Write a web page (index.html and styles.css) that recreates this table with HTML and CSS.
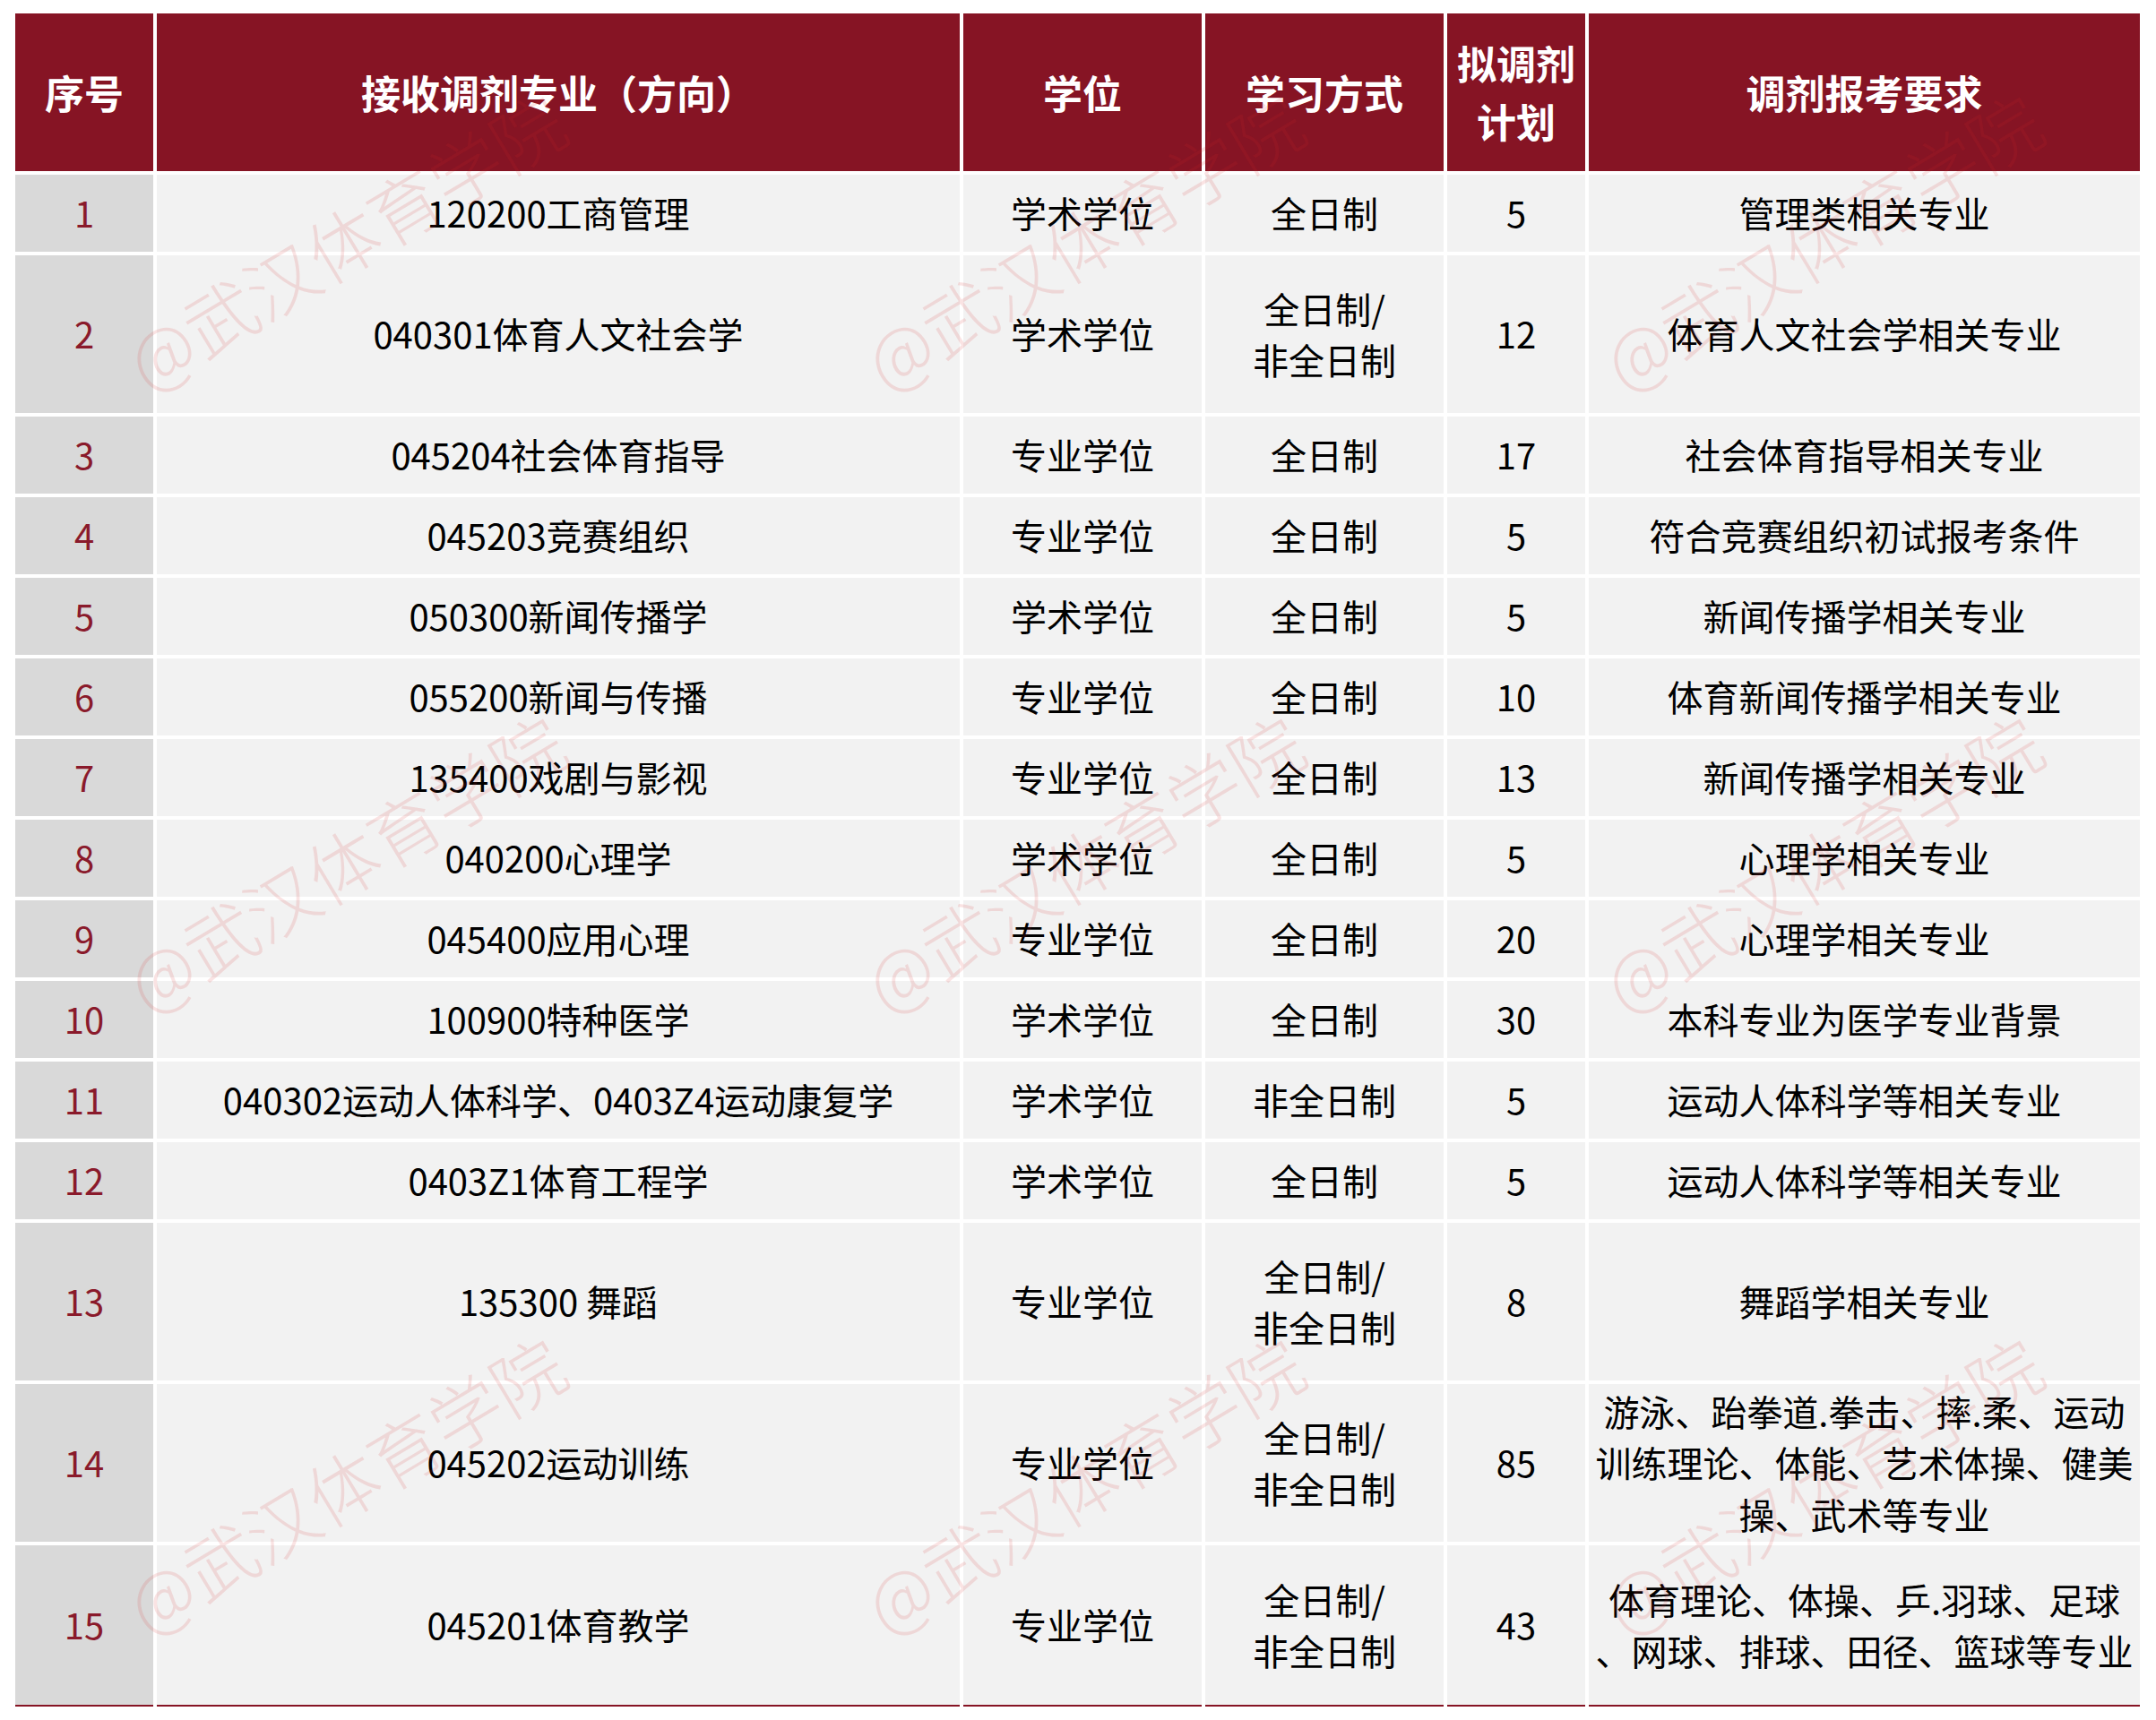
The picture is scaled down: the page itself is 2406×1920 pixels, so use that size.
FILE: index.html
```html
<!DOCTYPE html>
<html lang="zh-CN">
<head>
<meta charset="utf-8">
<title>接收调剂专业</title>
<link rel="stylesheet" href="styles.css">
</head>
<body>
<div class="page">
  <table class="grid">
    <colgroup>
      <col class="c-idx"><col class="c-major"><col class="c-degree"><col class="c-mode"><col class="c-plan"><col class="c-req">
    </colgroup>
    <thead>
      <tr class="h">
        <th>序号</th>
        <th>接收调剂专业（方向）</th>
        <th>学位</th>
        <th>学习方式</th>
        <th>拟调剂<br>计划</th>
        <th>调剂报考要求</th>
      </tr>
    </thead>
    <tbody>
      <tr class="s"><td class="idx">1</td><td>120200工商管理</td><td>学术学位</td><td>全日制</td><td>5</td><td>管理类相关专业</td></tr>
      <tr class="d"><td class="idx">2</td><td>040301体育人文社会学</td><td>学术学位</td><td>全日制/<br>非全日制</td><td>12</td><td>体育人文社会学相关专业</td></tr>
      <tr class="s"><td class="idx">3</td><td>045204社会体育指导</td><td>专业学位</td><td>全日制</td><td>17</td><td>社会体育指导相关专业</td></tr>
      <tr class="s"><td class="idx">4</td><td>045203竞赛组织</td><td>专业学位</td><td>全日制</td><td>5</td><td>符合竞赛组织初试报考条件</td></tr>
      <tr class="s"><td class="idx">5</td><td>050300新闻传播学</td><td>学术学位</td><td>全日制</td><td>5</td><td>新闻传播学相关专业</td></tr>
      <tr class="s"><td class="idx">6</td><td>055200新闻与传播</td><td>专业学位</td><td>全日制</td><td>10</td><td>体育新闻传播学相关专业</td></tr>
      <tr class="s"><td class="idx">7</td><td>135400戏剧与影视</td><td>专业学位</td><td>全日制</td><td>13</td><td>新闻传播学相关专业</td></tr>
      <tr class="s"><td class="idx">8</td><td>040200心理学</td><td>学术学位</td><td>全日制</td><td>5</td><td>心理学相关专业</td></tr>
      <tr class="s"><td class="idx">9</td><td>045400应用心理</td><td>专业学位</td><td>全日制</td><td>20</td><td>心理学相关专业</td></tr>
      <tr class="s"><td class="idx">10</td><td>100900特种医学</td><td>学术学位</td><td>全日制</td><td>30</td><td>本科专业为医学专业背景</td></tr>
      <tr class="s"><td class="idx">11</td><td>040302运动人体科学、0403Z4运动康复学</td><td>学术学位</td><td>非全日制</td><td>5</td><td>运动人体科学等相关专业</td></tr>
      <tr class="s"><td class="idx">12</td><td>0403Z1体育工程学</td><td>学术学位</td><td>全日制</td><td>5</td><td>运动人体科学等相关专业</td></tr>
      <tr class="d"><td class="idx">13</td><td>135300 舞蹈</td><td>专业学位</td><td>全日制/<br>非全日制</td><td>8</td><td>舞蹈学相关专业</td></tr>
      <tr class="d"><td class="idx">14</td><td>045202运动训练</td><td>专业学位</td><td>全日制/<br>非全日制</td><td>85</td><td>游泳、跆拳道.拳击、摔.柔、运动<br>训练理论、体能、艺术体操、健美<br>操、武术等专业</td></tr>
      <tr class="d last"><td class="idx">15</td><td>045201体育教学</td><td>专业学位</td><td>全日制/<br>非全日制</td><td>43</td><td>体育理论、体操、乒.羽球、足球<br>、网球、排球、田径、篮球等专业</td></tr>
    </tbody>
  </table>
  <div class="watermarks" aria-hidden="true">
    <span class="wm">@武汉体育学院</span><span class="wm">@武汉体育学院</span><span class="wm">@武汉体育学院</span>
    <span class="wm">@武汉体育学院</span><span class="wm">@武汉体育学院</span><span class="wm">@武汉体育学院</span>
    <span class="wm">@武汉体育学院</span><span class="wm">@武汉体育学院</span><span class="wm">@武汉体育学院</span>
  </div>
</div>
</body>
</html>
```

FILE: styles.css
```css
html, body {
  margin: 0;
  padding: 0;
  background: #ffffff;
}

body {
  font-family: "Noto Sans CJK SC", "Noto Sans", "Liberation Sans", sans-serif;
}

.page {
  position: relative;
  width: 2406px;
  height: 1920px;
  padding: 11px 0 0 13px;
  box-sizing: border-box;
  overflow: hidden;
}

.grid {
  border-collapse: separate;
  border-spacing: 4px;
  table-layout: fixed;
  width: 2379px;
}

.c-idx { width: 154px; }
.c-major { width: 896px; }
.c-degree { width: 266px; }
.c-mode { width: 266px; }
.c-plan { width: 154px; }
.c-req { width: 615px; }

.grid th {
  background: #861424;
  color: #ffffff;
  font-size: 44px;
  font-weight: 700;
  line-height: 65px;
  padding: 0;
  text-align: center;
  vertical-align: middle;
  white-space: nowrap;
}

.grid td {
  background: #f2f2f2;
  color: #000000;
  font-size: 40px;
  line-height: 57.5px;
  padding: 0;
  text-align: center;
  vertical-align: middle;
  white-space: nowrap;
}

.grid td.idx {
  background: #d9d9d9;
  color: #8a1a2b;
}

.h { height: 176px; }
.s { height: 86px; }
.d { height: 176px; }
.d.last { height: 180px; }

.grid .last td {
  border-bottom: 2px solid #861424;
}

.watermarks {
  position: absolute;
  left: -28px;
  top: -80px;
  display: grid;
  grid-template-columns: repeat(3, 824px);
  grid-template-rows: repeat(3, 694px);
  pointer-events: none;
}

.wm {
  display: flex;
  align-items: center;
  justify-content: center;
  font-size: 80px;
  font-weight: 300;
  line-height: 1;
  white-space: nowrap;
  color: rgba(214, 40, 40, 0.13);
  transform: rotate(-31deg);
}
```
